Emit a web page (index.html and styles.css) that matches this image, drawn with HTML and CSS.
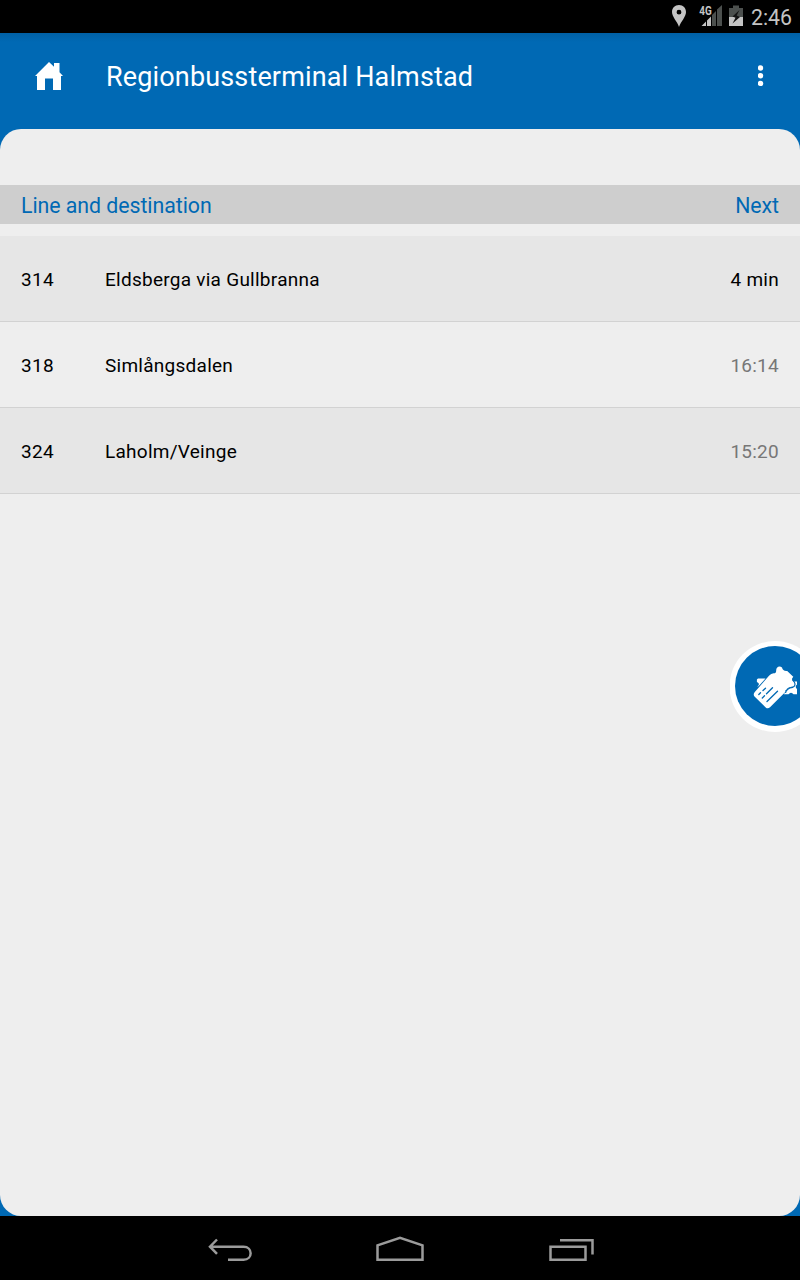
FILE: index.html
```html
<!DOCTYPE html>
<html lang="en">
<head>
<meta charset="utf-8">
<title>Regionbussterminal Halmstad</title>
<link rel="stylesheet" href="styles.css">
</head>
<body>
<div class="screen">
  <div class="status">
    <svg class="status-icons" width="80" height="33" viewBox="0 0 80 33">
      <path fill="#c4c4c4" fill-rule="evenodd" d="M9 5C4.800 5 2 8 2 12C2 17 7 21 9 27C11 21 16 17 16 12C16 8 13.200 5 9 5ZM9 9.800A2.400 2.400 0 1 1 9 14.600A2.400 2.400 0 1 1 9 9.800Z"/>
      <path fill="#4c504e" d="M42 15L46 11V26H42ZM47 9.500L52 5V26H47Z"/>
      <path fill="#c4c4c4" d="M31.500 26L36 21.500V26ZM37 20.500L41 16.500V26H37Z"/>
      <text class="network" x="29.300" y="15.300" textLength="12.500" lengthAdjust="spacingAndGlyphs">4G</text>
      <path fill="#4c504e" d="M63 5.500H69V8H73V26H59V8H63Z"/>
      <path fill="#c4c4c4" d="M59 17H73V26H59Z"/>
      <path fill="#151515" d="M69.500 10L62.500 16.500L65.500 17.700L62.500 23.500L70 17L66.700 15.500Z"/>
    </svg>
    <span class="clock">2:46</span>
  </div>
  <header class="bar">
    <svg class="home" width="28" height="28" viewBox="0 0 28 28"><path fill="#fff" d="M0 14L14 0L19 4.800V1H24.500V10.300L28 14H26V28H18V16.500H10V28H2V14Z"/></svg>
    <h1 class="title">Regionbussterminal Halmstad</h1>
    <svg class="more" width="6" height="22" viewBox="0 0 6 22" fill="#fff"><circle cx="2.500" cy="3" r="2.700"/><circle cx="2.500" cy="10.700" r="2.700"/><circle cx="2.500" cy="18.400" r="2.700"/></svg>
  </header>
  <main class="backing">
    <div class="panel">
      <div class="head"><span>Line and destination</span><span>Next</span></div>
      <div class="row shaded"><span class="line">314</span><span class="dest">Eldsberga via Gullbranna</span><span class="time soon">4 min</span></div>
      <div class="row"><span class="line">318</span><span class="dest">Simlångsdalen</span><span class="time">16:14</span></div>
      <div class="row shaded"><span class="line">324</span><span class="dest">Laholm/Veinge</span><span class="time">15:20</span></div>
    </div>
  </main>
  <svg class="ticket" width="70" height="91" viewBox="0 0 70 91">
    <circle cx="45" cy="45.500" r="45.500" fill="#fff"/>
    <circle cx="45" cy="45" r="40" fill="#0069b4"/>
    <path fill="#fff" d="M28 37.500H35.500L28.500 45.300L27 45.500C29.500 44.500 29.500 42 26.900 41V38.500Z"/>
    <path fill="#fff" d="M63 40.500H67V43.500C65.300 44.500 65.300 47 67 48V53.300H63.500C62 51.300 60 51.300 58.500 53.300H54L56.500 48L63 46Z"/>
    <path fill="#fff" d="M24.800 51L39 34.800Q41.500 31.500 45 32.300C47 31 45.500 28.500 47 26.800Q49.300 24.500 52 26.500C52.500 29 54.500 30.500 57.200 30L63.500 36C61.500 38 61.800 39.500 63.700 41Q65.500 43.500 63 45.500C58 46 55.300 48.500 54.800 51.500L40 66.300Q37.800 68.300 35.700 66.500L24.500 55.500Q22.800 53.200 24.800 51Z"/>
    <path fill="none" stroke="#0069b4" stroke-width="1.200" d="M63.900 36C61.900 38 62.800 39.500 64.400 41.200Q66.200 44.500 62.800 46.300C58.500 46.800 56 48.500 55.500 52"/>
    <path fill="none" stroke="#0069b4" stroke-width="1.300" stroke-linecap="round" d="M28.800 53.500L30.500 51.800M33 49.500L35.500 47.200M32.300 57L34.500 54.800M36.500 52.800L42.500 46.800M37 60.500L47.500 50.300"/>
  </svg>
  <nav class="nav">
    <svg width="420" height="64" viewBox="190 1216 420 64" fill="none" stroke="#9b9b9b" stroke-width="2.500">
      <path d="M217 1239.500L210 1246.700L217 1253.800M210.500 1246.700H243.500C253 1246.700 253 1259.800 243.500 1259.800H228"/>
      <path d="M377.500 1259.800V1245.300L400 1237.800L422.500 1245.300V1259.800Z"/>
      <path d="M550.500 1246.700H585.500V1259.800H550.500ZM560 1240.200H592.500V1254.500"/>
    </svg>
  </nav>
</div>
</body>
</html>
```
FILE: styles.css
```css
body { margin: 0; font-family: Roboto, sans-serif; }
.screen { position: relative; display: flex; flex-direction: column; width: 800px; height: 1280px; overflow: hidden; background: #0069b4; }
.status { display: flex; justify-content: flex-end; height: 33px; padding-right: 8px; background: #000; }
.status-icons { margin-right: 1px; }
.network { fill: #c4c4c4; font-size: 12.5px; font-weight: 700; }
.clock { color: #c4c4c4; font-size: 21.3px; line-height: 35px; }
.bar { display: flex; align-items: center; box-sizing: border-box; height: 96px; padding: 0 36px 10px 35px; background: linear-gradient(#0060a5, #0069b4 9px); }
.title { flex: 1; margin: 2px 0 0 43px; color: #fff; font-size: 27px; font-weight: 400; line-height: 32px; letter-spacing: 0.15px; }
.backing { display: flex; flex: 1; background: #0069b4; }
.panel { flex: 1; padding-top: 56px; border-radius: 21px; background: #eee; }
.head { display: flex; justify-content: space-between; height: 39px; margin-bottom: 12px; padding: 0 21px; background: #cecece; color: #0069b4; font-size: 21.3px; line-height: 41px; letter-spacing: -0.04px; }
.row { display: flex; box-sizing: border-box; height: 86px; padding: 0 21px; border-bottom: 1px solid #d2d2d2; color: #000; font-size: 19px; line-height: 88px; letter-spacing: 0.26px; }
.shaded { background: #e6e6e6; }
.line { width: 84px; }
.dest { flex: 1; }
.time { color: #777; }
.soon { color: #000; }
.ticket { position: absolute; top: 641px; right: 0; }
.nav { display: flex; height: 64px; padding-left: 190px; background: #000; }
```
